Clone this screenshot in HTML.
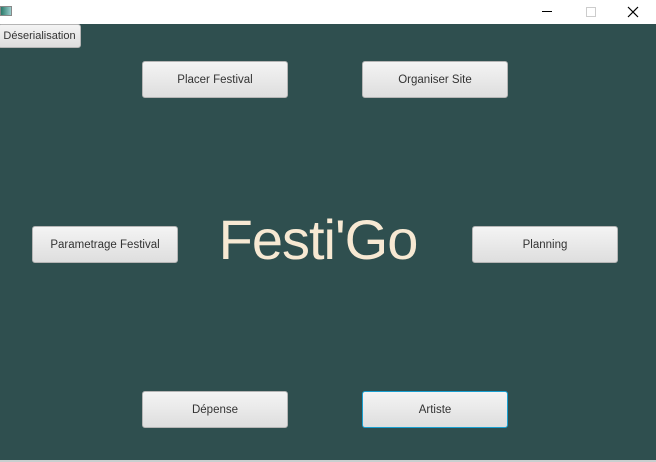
<!DOCTYPE html><html><head><style>
body{margin:0;width:656px;height:462px;overflow:hidden;background:#2f4f4f;font-family:"Liberation Sans",sans-serif;position:relative}
.tb{position:absolute;left:0;top:0;width:656px;height:24px;background:#fff}
.b{position:absolute;box-sizing:border-box;width:146px;height:37px;border:1px solid #b5b5b5;border-radius:3px;background:linear-gradient(#f4f4f4,#dedede);font-size:11.5px;color:#333;display:flex;align-items:center;justify-content:center}
.t{position:absolute;left:200px;width:236px;top:200px;text-align:center;font-size:56px;color:#f7e9d3;line-height:80px;letter-spacing:-1px}
</style></head><body>
<div class="tb">
<div style="position:absolute;left:0;top:6px;width:10px;height:8px;border:1px solid #888;background:linear-gradient(90deg,#2a7a6a,#9cc)"></div>
<div style="position:absolute;left:542px;top:11px;width:10px;height:1px;background:#000"></div>
<div style="position:absolute;left:586px;top:7px;width:8px;height:8px;border:1px solid #ccc"></div>
<svg style="position:absolute;left:627px;top:6px" width="12" height="12"><path d="M1 1L11 11M11 1L1 11" stroke="#000" stroke-width="1.2"/></svg>
</div>
<div class="b" style="left:-2px;top:24px;width:83px;height:24px;font-size:11px">Déserialisation</div>
<div class="b" style="left:142px;top:61px">Placer Festival</div>
<div class="b" style="left:362px;top:61px">Organiser Site</div>
<div class="b" style="left:32px;top:226px">Parametrage Festival</div>
<div class="b" style="left:472px;top:226px">Planning</div>
<div class="b" style="left:142px;top:391px">Dépense</div>
<div class="b" style="left:362px;top:391px;border:1px solid #1a9fd0">Artiste</div>
<div class="t">Festi'Go</div>
<div style="position:absolute;left:0;top:460px;width:656px;height:2px;background:#c8cfcf"></div>
</body></html>
